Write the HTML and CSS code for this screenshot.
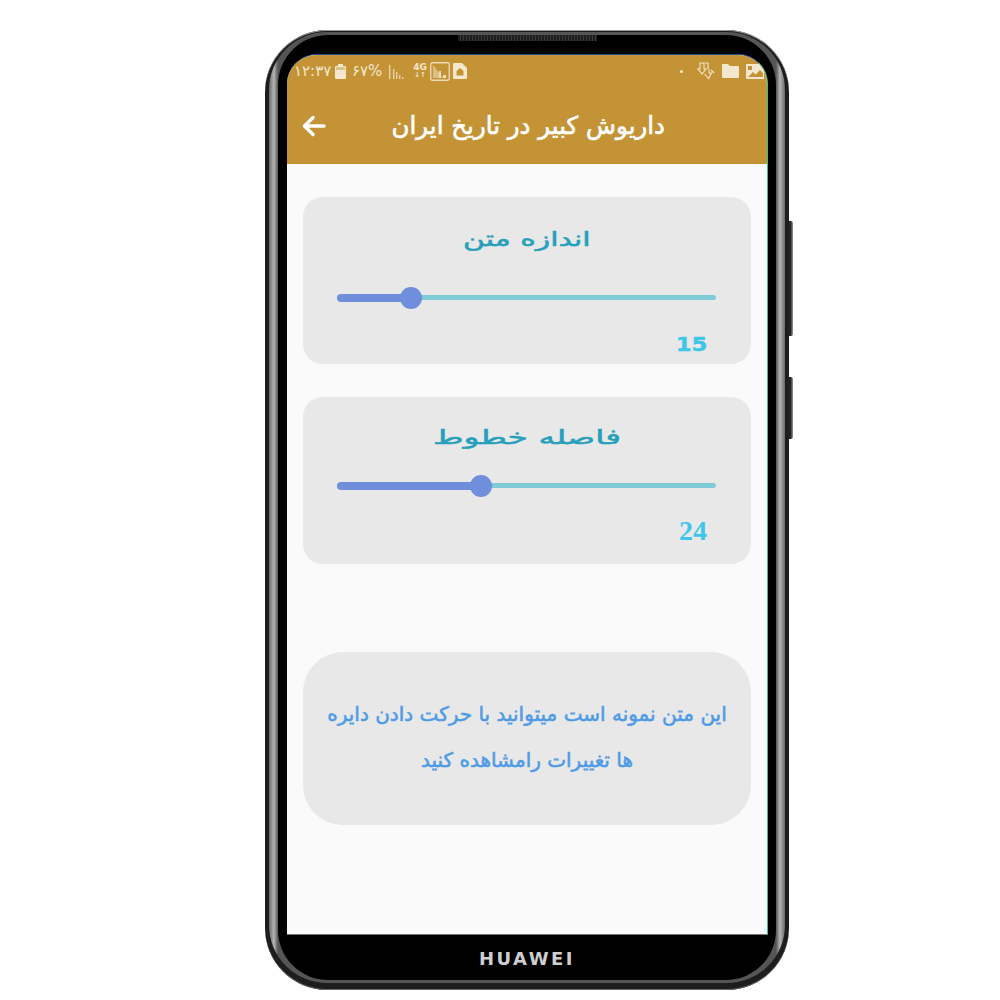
FILE: index.html
```html
<!DOCTYPE html>
<html lang="fa">
<head>
<meta charset="utf-8">
<title>داریوش کبیر در تاریخ ایران</title>
<link rel="stylesheet" href="styles.css">
</head>
<body>
<div class="stage">
  <div class="phone">
    <span class="side side-a"></span>
    <span class="side side-b"></span>
    <div class="ring">
      <div class="bezel">
        <span class="speaker"></span>
        <div class="screen">
          <header class="appbar">
            <div class="status">
              <div class="status-left">
                <span class="clock">۱۲:۳۷</span>
                <svg class="i-batt" width="11" height="15" viewBox="0 0 11 15"><path fill="#f3e7cd" d="M3 0h5v2h2a1 1 0 0 1 1 1v11a1 1 0 0 1-1 1H1a1 1 0 0 1-1-1V3a1 1 0 0 1 1-1h2z"/><path fill="#c39336" opacity=".45" d="M1 3h9v3H1z"/></svg>
                <span class="pct">۶۷%</span>
                <svg class="i-sig" width="16" height="15" viewBox="0 0 16 15"><g fill="#e6d3a8"><rect x="0" y="1" width="1.4" height="14"/><rect x="4" y="5" width="1.4" height="10"/><rect x="7" y="8" width="1.4" height="7"/><rect x="10" y="11" width="1.4" height="4"/><rect x="13" y="13" width="1.4" height="2"/></g></svg>
                <span class="net">4G<small>↓↑</small></span>
                <svg class="i-box" width="20" height="19" viewBox="0 0 20 19"><rect x=".75" y=".75" width="18.5" height="17.5" rx="1.5" fill="none" stroke="#ecdcb8" stroke-width="1.3"/><path fill="#ecdcb8" d="M3 3l10 13H3z" opacity=".6"/><path fill="#ecdcb8" d="M9 9h2v7H9zM13 13h3v3h-3z"/></svg>
                <svg class="i-sim" width="14" height="16" viewBox="0 0 14 16"><path fill="#f3e7cd" d="M1 0h8l5 5v10a1 1 0 0 1-1 1H1a1 1 0 0 1-1-1V1a1 1 0 0 1 1-1z"/><path fill="#c39336" d="M3.500 8L7 5l3.500 3v4.500h-7z"/></svg>
              </div>
              <div class="status-right">
                <span class="dot"></span>
                <svg width="18" height="18" viewBox="0 0 18 18" fill="none" stroke="#f3e7cd" stroke-width="1.1"><path d="M3 1h4v6h2l-4 5-4-5h2z"/><path d="M8 1h3v6"/><path d="M12 7v4h2.500l-3 5.500-4-4.500"/><path d="M14 8l3 3"/></svg>
                <svg width="17" height="14" viewBox="0 0 17 14"><path fill="#f3e7cd" d="M1 0h5l2 2h8a1 1 0 0 1 1 1v10a1 1 0 0 1-1 1H1a1 1 0 0 1-1-1V1a1 1 0 0 1 1-1z"/></svg>
                <svg width="18" height="15" viewBox="0 0 18 15"><path fill="#f3e7cd" d="M1 0h16a1 1 0 0 1 1 1v14H1a1 1 0 0 1-1-1V1a1 1 0 0 1 1-1z"/><rect x="2" y="2" width="4" height="4" fill="#c39336"/><path fill="#c39336" d="M2 13l5-5 2.500 2.500L14 6l3 3v4z"/></svg>
              </div>
            </div>
            <div class="toolbar">
              <svg class="back" width="24" height="22" viewBox="0 0 24 22" fill="none" stroke="#fff" stroke-width="3.400" stroke-linecap="round" stroke-linejoin="round"><path d="M22 11H3M11 2.500L2.500 11l8.500 8.500"/></svg>
              <h1 class="title">داریوش کبیر در تاریخ ایران</h1>
            </div>
          </header>
          <main class="content">
            <section class="card">
              <h2 class="card-title"><span class="wide wide-a">اندازه متن</span></h2>
              <div class="slider slider-a">
                <div class="fill" style="width:74px"><span class="thumb"></span></div>
              </div>
              <div class="value value-wide">15</div>
            </section>
            <section class="card">
              <h2 class="card-title card-title-tight"><span class="wide wide-b">فاصله خطوط</span></h2>
              <div class="slider slider-b">
                <div class="fill" style="width:144px"><span class="thumb"></span></div>
              </div>
              <div class="value value-serif">24</div>
            </section>
            <section class="sample">
              <p>این متن نمونه است میتوانید با حرکت دادن دایره<br>ها تغییرات رامشاهده کنید</p>
            </section>
          </main>
        </div>
        <div class="chin">HUAWEI</div>
      </div>
    </div>
  </div>
</div>
</body>
</html>
```

FILE: styles.css
```css
* { box-sizing: border-box; }
html, body { margin: 0; padding: 0; background: #fff; }
body { width: 1000px; height: 1000px; overflow: hidden; font-family: "DejaVu Sans", sans-serif; }

.stage { padding: 30px 0 0 265px; }

.phone {
  position: relative;
  width: 524px;
  height: 960px;
  padding: 2px 4px 7px;
  border-radius: 62px;
  background: #1d1d1d;
  box-shadow: inset 0 1px 0 #9a9a9a, inset 0 -1px 0 #666;
}
.side {
  position: absolute;
  left: 523px;
  width: 5px;
  background: linear-gradient(90deg, #222 0 50%, #9a9a9a 100%);
  border-radius: 0 2px 2px 0;
}
.side-a { top: 191px; height: 115px; }
.side-b { top: 347px; height: 62px; }

.ring {
  height: 100%;
  padding: 3px 9px;
  border-radius: 58px;
  background: linear-gradient(90deg, #6a6a6a 0, #b4b4b4 5px, #555 9px, #555 calc(100% - 9px), #b4b4b4 calc(100% - 5px), #6a6a6a 100%);
  background-color: #555;
}
.bezel {
  position: relative;
  display: flex;
  flex-direction: column;
  height: 100%;
  padding: 19px 9px 0;
  border-radius: 50px;
  background: #000;
}
.speaker {
  position: absolute;
  top: 0;
  left: 180px;
  width: 139px;
  height: 6px;
  background: repeating-linear-gradient(90deg, #1c1c1c 0 2px, #3c3c3c 2px 3px);
}
.screen {
  flex: none;
  display: flex;
  flex-direction: column;
  width: 481px;
  height: 881px;
  border-radius: 30px 30px 0 0;
  overflow: hidden;
  background: #fafafa;
  border-top: 1px solid #27518f;
  border-right: 1px solid #3fc07e;
  border-bottom: 1px solid #777;
}

.appbar { flex: none; height: 109px; background: #c39336; }
.status {
  display: flex;
  justify-content: space-between;
  align-items: center;
  height: 32px;
  padding: 0 3px 0 7px;
  direction: ltr;
}
.status-left, .status-right { display: flex; align-items: center; }
.clock, .pct { color: #f3e7cd; font-size: 15px; line-height: 18px; white-space: nowrap; }
.clock { width: 34px; }
.i-batt { margin-left: 7px; }
.pct { width: 30px; margin-left: 6px; }
.i-sig { margin-left: 7px; }
.net {
  display: flex;
  flex-direction: column;
  align-items: center;
  width: 16px;
  margin-left: 7px;
  color: #f3e7cd;
  font-size: 9px;
  font-weight: 700;
  line-height: 9px;
}
.net small { font-size: 7px; line-height: 7px; }
.i-box { margin-left: 2px; }
.i-sim { margin-left: 3px; }
.status-right { gap: 7px; }
.dot { width: 3px; height: 3px; margin-right: 7px; border-radius: 50%; background: #f3e7cd; }

.toolbar { display: flex; align-items: center; justify-content: space-between; height: 77px; padding: 0 102px 0 15px; direction: ltr; }
.back { flex: none; }
.title {
  margin: 0;
  color: #fff;
  font-size: 24.500px;
  font-weight: 400;
  line-height: 30px;
  white-space: nowrap;
  direction: rtl;
  -webkit-text-stroke: 0.6px #fff;
}

.content { flex: 1; display: flex; flex-direction: column; padding: 33px 16px 0; }
.card {
  display: flex;
  flex-direction: column;
  height: 167px;
  margin-bottom: 33px;
  border-radius: 20px;
  background: #e8e8e8;
}
.card-title {
  height: 30px;
  margin: 27px 0 0;
  color: #27a0bc;
  font-size: 20px;
  font-weight: 400;
  line-height: 30px;
  text-align: center;
}
.card-title-tight { margin-top: 25px; }
.wide { display: inline-block; -webkit-text-stroke: 0.5px #27a0bc; }
.wide-a { transform: scale(1.49, 1); }
.wide-b { transform: scale(1.65, 1); }
.slider {
  position: relative;
  flex: none;
  width: 379px;
  height: 5px;
  margin-left: 34px;
  border-radius: 3px;
  background: #7fccd9;
}
.slider-a { margin-top: 41px; }
.slider-b { margin-top: 31px; }
.fill {
  position: relative;
  top: -1.5px;
  height: 8px;
  border-radius: 4px 0 0 4px;
  background: #6f8edb;
}
.thumb {
  position: absolute;
  right: -11px;
  top: -7px;
  width: 22px;
  height: 22px;
  border-radius: 50%;
  background: #6f8edb;
}
.value {
  align-self: flex-end;
  margin-right: 44px;
  color: #3ec6ea;
  font-weight: 700;
}
.value-wide {
  margin-top: 34px;
  font-size: 19px;
  line-height: 20px;
  transform: scale(1.2, 1);
  transform-origin: right center;
  -webkit-text-stroke: 0.4px #3ec6ea;
}
.value-serif {
  margin-top: 31px;
  font-family: "Liberation Serif", serif;
  font-size: 28px;
  line-height: 24px;
}

.sample {
  display: flex;
  align-items: center;
  justify-content: center;
  height: 173px;
  margin-top: 55px;
  padding-bottom: 4px;
  border-radius: 40px;
  background: #e8e8e8;
}
.sample p {
  margin: 0;
  color: #4f9be6;
  font-size: 20px;
  line-height: 46px;
  text-align: center;
  white-space: nowrap;
  -webkit-text-stroke: 0.55px #4f9be6;
}

.chin {
  flex: 1;
  display: flex;
  align-items: center;
  justify-content: center;
  padding: 2px 0 0;
  color: #cfcfcf;
  font-size: 18px;
  font-weight: 700;
  letter-spacing: 2.500px;
}
```
